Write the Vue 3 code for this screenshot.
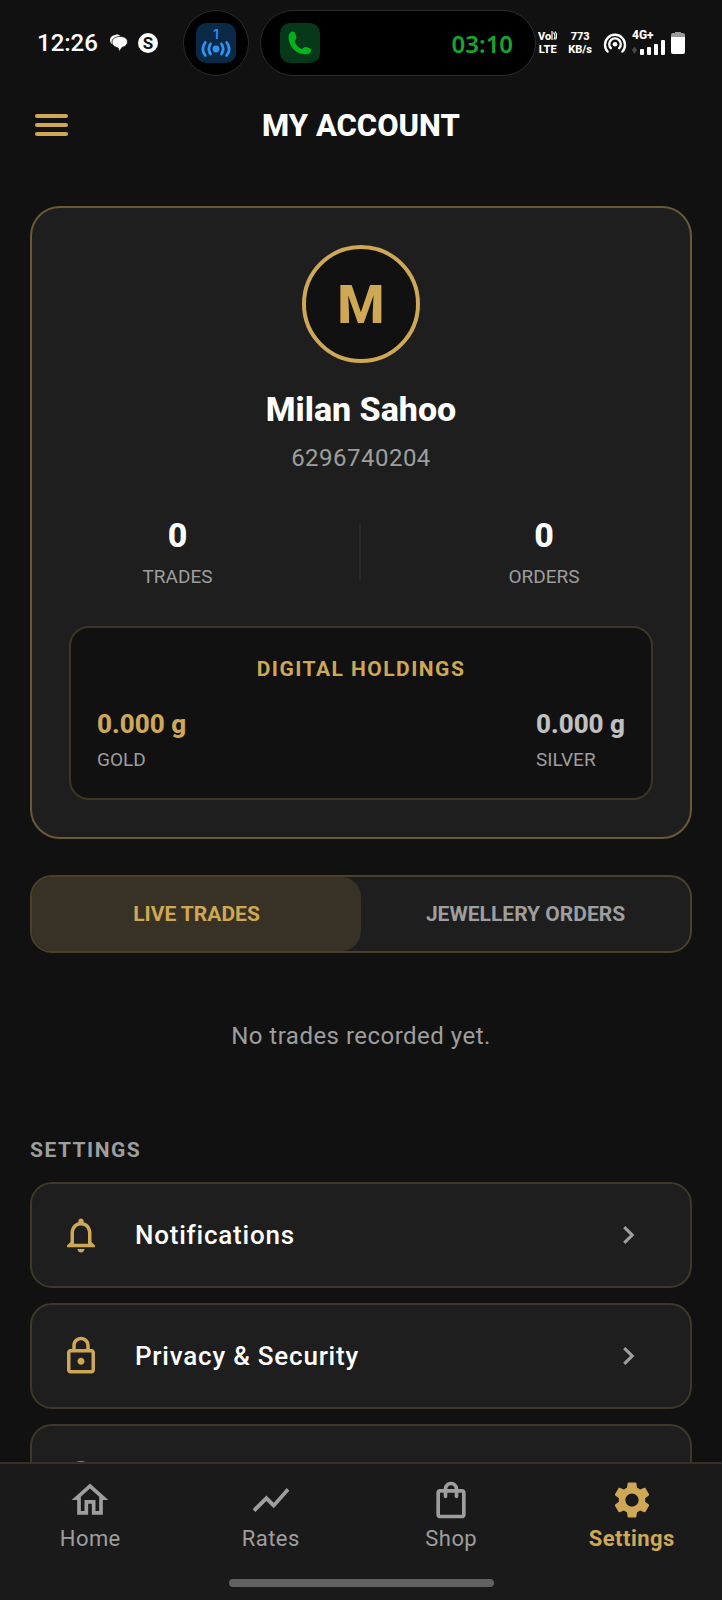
<template>
  <div class="screen">
    <!-- Status bar -->
    <div class="status-bar">
      <div class="status-left">
        <span class="clock">12:26</span>
        <svg class="chat-icon" viewBox="0 0 18 18" aria-hidden="true">
          <path d="M8 .5C3.500.5 0 2.800 0 6c0 2 1 3.500 2.500 4.500L12 3z" fill="#fff" />
          <path d="M10 2.500c4.500 0 7.500 2 7.500 5.300 0 3-2.300 5-5.500 5.600L9.300 17.500 8.200 14C4.500 13 2 11 2 8c0-3.200 3.500-5.500 8-5.500z" fill="#fff" stroke="#111" stroke-width=".8" />
        </svg>
        <span class="s-badge">S</span>
      </div>

      <div class="island island-round">
        <div class="hotspot-tile">
          <span>1</span>
          <svg viewBox="0 0 30 18" aria-hidden="true">
            <circle cx="15" cy="9" r="3.400" fill="#2e93f5" />
            <g fill="none" stroke="#2e93f5" stroke-width="2.800" stroke-linecap="round">
              <path d="M9.500 4c-2 3-2 7 0 10M20.500 4c2 3 2 7 0 10" />
              <path d="M4.300 2.500c-3 4-3 9 0 13M25.700 2.500c3 4 3 9 0 13" />
            </g>
          </svg>
        </div>
      </div>

      <div class="island island-call">
        <div class="call-tile">
          <svg viewBox="0 0 24 24" aria-hidden="true">
            <path d="M3 1C.8 2.200.3 5 .7 8c1.200 8.500 8 14.800 15.800 15.300 3 .2 5.700-.6 6.500-2.800.6-1.600-.2-2.800-1.800-3.400l-2.400-.8c-1.400-.5-2.400-.2-3.300.8-.8.9-1.800 1-2.900.4-2.600-1.400-4.500-3.500-5.700-6.100-.5-1.100-.3-2 .5-2.700 1-.9 1.400-1.900.9-3.200L7.300 2.800C6.500.8 4.800 0 3 1z" fill="#00b519" />
          </svg>
        </div>
        <span class="call-time">03:10</span>
      </div>

      <div class="status-right">
        <span class="tiny-stack"><span>Vo<svg class="volte" viewBox="0 0 6 9" aria-hidden="true"><path d="M1 0v9M2.500 1.500q2.500 3 .5 7M4 .5q3 4 .5 8" fill="none" stroke="#fff" stroke-width="1.200" /></svg></span><span>LTE</span></span>
        <span class="tiny-stack"><span>773</span><span>KB/s</span></span>
        <svg class="hotspot" viewBox="0 0 24 22" aria-hidden="true">
          <g fill="none" stroke="#fff" stroke-width="2.400" stroke-linecap="round">
            <path d="M4.600 19.500a10 10 0 1 1 14.800 0" />
            <path d="M7.800 16.200a5.800 5.800 0 1 1 8.400 0" />
          </g>
          <circle cx="12" cy="12.300" r="2.300" fill="#fff" />
        </svg>
        <span class="signal">
          <span>4G+</span>
          <svg viewBox="0 0 34 16" aria-hidden="true">
            <path d="M0 11l2.500-3.500L5 11l-2.500 4z" fill="#4a4a4a" />
            <g fill="#fff">
              <rect x="8" y="10" width="4" height="6" rx="1" />
              <rect x="15" y="8" width="4" height="8" rx="1" />
              <rect x="22" y="5" width="4" height="11" rx="1" />
              <rect x="29" y="1" width="4" height="15" rx="1" />
            </g>
          </svg>
        </span>
        <svg class="battery" viewBox="0 0 14 22" aria-hidden="true">
          <path d="M4 0h6v1h2a2 2 0 0 1 2 2v2H0V3a2 2 0 0 1 2-2h2z" fill="#999" />
          <path d="M0 5h14v15a2 2 0 0 1-2 2H2a2 2 0 0 1-2-2z" fill="#fff" />
        </svg>
      </div>
    </div>

    <!-- App bar -->
    <header class="app-bar">
      <button class="menu-btn" type="button" aria-label="Menu">
        <span></span>
        <span></span>
        <span></span>
      </button>
      <h1>MY ACCOUNT</h1>
    </header>

    <main class="content">
      <!-- Profile -->
      <section class="profile-card">
        <div class="avatar">{{ user.name.charAt(0) }}</div>
        <h2 class="user-name">{{ user.name }}</h2>
        <p class="user-phone">{{ user.phone }}</p>

        <div class="stats">
          <div class="stat">
            <strong>{{ user.trades }}</strong>
            <span class="caption">TRADES</span>
          </div>
          <div class="stat-divider"></div>
          <div class="stat">
            <strong>{{ user.orders }}</strong>
            <span class="caption">ORDERS</span>
          </div>
        </div>

        <div class="holdings">
          <h3>DIGITAL HOLDINGS</h3>
          <div class="holdings-row">
            <div v-for="metal in holdings" :key="metal.label" class="holding" :class="metal.type">
              <strong>{{ metal.grams.toFixed(3) }} g</strong>
              <span class="caption">{{ metal.label }}</span>
            </div>
          </div>
        </div>
      </section>

      <!-- Tabs -->
      <div class="tabs" role="tablist">
        <button
          v-for="tab in tabs"
          :key="tab.id"
          type="button"
          role="tab"
          class="tab"
          :class="{ active: activeTab === tab.id }"
          :aria-selected="activeTab === tab.id"
          @click="activeTab = tab.id"
        >
          {{ tab.label }}
        </button>
      </div>
      <p class="empty">{{ emptyText }}</p>

      <!-- Settings -->
      <h3 class="section-title">SETTINGS</h3>
      <div class="settings-list">
        <button
          v-for="item in settings"
          :key="item.id"
          type="button"
          class="setting"
          :aria-label="item.id"
        >
          <svg class="setting-icon" viewBox="0 0 24 24" aria-hidden="true">
            <path :d="item.icon" />
          </svg>
          <span>{{ item.label }}</span>
          <svg class="chevron" viewBox="0 0 24 24" aria-hidden="true">
            <path d="M9 7l5 5-5 5" />
          </svg>
        </button>
      </div>
    </main>

    <!-- Bottom navigation -->
    <footer class="bottom-bar">
      <nav>
        <a
          v-for="item in navItems"
          :key="item.label"
          :href="item.href"
          class="nav-item"
          :class="{ active: item.active }"
        >
          <svg viewBox="0 0 24 24" aria-hidden="true">
            <path :d="item.icon" />
          </svg>
          <span>{{ item.label }}</span>
        </a>
      </nav>
      <div class="gesture-bar"></div>
    </footer>
  </div>
</template>

<script setup>
import { ref, computed } from 'vue';

const user = {
  name: 'Milan Sahoo',
  phone: '6296740204',
  trades: 0,
  orders: 0
};

const holdings = [
  { type: 'gold', label: 'GOLD', grams: 0 },
  { type: 'silver', label: 'SILVER', grams: 0 }
];

const tabs = [
  { id: 'trades', label: 'LIVE TRADES' },
  { id: 'orders', label: 'JEWELLERY ORDERS' }
];
const activeTab = ref('trades');

const emptyText = computed(() =>
  activeTab.value === 'trades' ? 'No trades recorded yet.' : 'No orders recorded yet.'
);

const settings = [
  {
    id: 'Notifications',
    label: 'Notifications',
    icon: 'M12 22c1.100 0 2-.9 2-2h-4c0 1.100.9 2 2 2zm6-6v-5c0-3.070-1.630-5.640-4.500-6.320V4c0-.83-.67-1.500-1.500-1.500s-1.500.67-1.500 1.500v.68C7.640 5.360 6 7.920 6 11v5l-2 2v1h16v-1l-2-2zm-2 1H8v-6c0-2.480 1.510-4.500 4-4.500s4 2.020 4 4.500v6z'
  },
  {
    id: 'Privacy & Security',
    label: 'Privacy & Security',
    icon: 'M18 8h-1V6c0-2.760-2.240-5-5-5S7 3.240 7 6v2H6c-1.100 0-2 .9-2 2v10c0 1.100.9 2 2 2h12c1.100 0 2-.9 2-2V10c0-1.100-.9-2-2-2zM9 6c0-1.660 1.340-3 3-3s3 1.340 3 3v2H9V6zm9 14H6V10h12v10zm-6-3c1.100 0 2-.9 2-2s-.9-2-2-2-2 .9-2 2 .9 2 2 2z'
  },
  {
    id: 'Support',
    label: '',
    icon: 'M12 3c-4.970 0-9 4.030-9 9v7c0 1.100.9 2 2 2h4v-8H5v-1c0-3.870 3.130-7 7-7s7 3.130 7 7v1h-4v8h4c1.100 0 2-.9 2-2v-7c0-4.970-4.030-9-9-9z'
  }
];

const navItems = [
  {
    label: 'Home',
    href: '#home',
    icon: 'M12 5.690l5 4.500V18h-2v-6H9v6H7v-7.810l5-4.500M12 3L2 12h3v8h6v-6h2v6h6v-8h3L12 3z'
  },
  {
    label: 'Rates',
    href: '#rates',
    icon: 'M3.500 18.490l6-6.010 4 4L22 6.920l-1.410-1.410-7.090 7.970-4-4L2 16.990z'
  },
  {
    label: 'Shop',
    href: '#shop',
    icon: 'M18 6h-2c0-2.210-1.790-4-4-4S8 3.790 8 6H6c-1.100 0-2 .9-2 2v12c0 1.100.9 2 2 2h12c1.100 0 2-.9 2-2V8c0-1.100-.9-2-2-2zm-6-2c1.100 0 2 .9 2 2h-4c0-1.100.9-2 2-2zm6 16H6V8h2v2c0 .55.45 1 1 1s1-.45 1-1V8h4v2c0 .55.45 1 1 1s1-.45 1-1V8h2v12z'
  },
  {
    label: 'Settings',
    href: '#settings',
    active: true,
    icon: 'M19.140 12.940c.04-.3.060-.61.060-.94 0-.32-.02-.64-.07-.94l2.030-1.580c.18-.14.23-.41.120-.61l-1.920-3.320c-.12-.22-.37-.29-.59-.22l-2.390.96c-.5-.38-1.030-.7-1.620-.94l-.36-2.540c-.04-.24-.24-.41-.48-.41h-3.840c-.24 0-.43.17-.47.41l-.36 2.540c-.59.24-1.130.57-1.620.94l-2.390-.96c-.22-.08-.47 0-.59.22L2.740 8.870c-.12.210-.08.470.12.610l2.030 1.580c-.05.3-.09.63-.09.940s.02.640.07.940l-2.030 1.580c-.18.140-.23.410-.12.610l1.920 3.320c.12.220.37.290.59.220l2.390-.96c.5.380 1.030.7 1.620.94l.36 2.540c.05.240.24.410.48.410h3.840c.24 0 .44-.17.47-.41l.36-2.540c.59-.24 1.130-.56 1.620-.94l2.390.96c.22.080.47 0 .59-.22l1.920-3.320c.12-.22.070-.47-.12-.61l-2.010-1.580zM12 15.600c-1.980 0-3.600-1.620-3.600-3.600s1.620-3.600 3.600-3.600 3.600 1.620 3.600 3.600-1.620 3.600-3.600 3.600z'
  }
];
</script>

<style>
body {
  background: #111;
}
</style>

<style scoped>
.screen {
  display: flex;
  flex-direction: column;
  height: 100vh;
  overflow: hidden;
  background: #111;
  color: #fff;
  font-family: Roboto, sans-serif;
}

.screen * {
  box-sizing: border-box;
}

h1,
h2,
h3,
p {
  margin: 0;
}

button {
  border: none;
  background: none;
  padding: 0;
  color: inherit;
  font-family: inherit;
  cursor: pointer;
}

/* Status bar */
.status-bar {
  display: flex;
  align-items: center;
  flex-shrink: 0;
  height: 86px;
  padding: 0 37px;
}

.status-left {
  display: flex;
  align-items: center;
  flex: 1;
  gap: 10px;
}

.clock {
  margin-right: 2px;
  font-size: 24px;
  font-weight: 500;
}

.chat-icon {
  width: 18px;
  height: 18px;
}

.s-badge {
  width: 20px;
  height: 20px;
  border-radius: 50%;
  background: #fff;
  color: #111;
  font-size: 17px;
  font-weight: 700;
  line-height: 20px;
  text-align: center;
}

.island {
  display: flex;
  align-items: center;
  height: 66px;
  border: 1px solid #2b2b2b;
  border-radius: 33px;
  background: #000;
}

.island-round {
  justify-content: center;
  width: 66px;
  margin-right: 11px;
}

.island-call {
  justify-content: space-between;
  width: 276px;
  padding: 0 22px 0 19px;
}

.hotspot-tile,
.call-tile {
  display: flex;
  flex-direction: column;
  align-items: center;
  justify-content: center;
  width: 40px;
  height: 40px;
  border-radius: 10px;
}

.hotspot-tile {
  background: #0a2947;
  color: #2e93f5;
  font-family: Inter, sans-serif;
  font-size: 13px;
  font-weight: 600;
  line-height: 12px;
}

.hotspot-tile svg {
  width: 30px;
  height: 18px;
}

.call-tile {
  background: #07381a;
}

.call-tile svg {
  width: 24px;
  height: 24px;
}

.call-time {
  color: #17a62d;
  font-family: "Noto Sans", sans-serif;
  font-size: 24px;
  font-weight: 600;
}

.status-right {
  display: flex;
  align-items: center;
  gap: 11px;
  margin-left: 2px;
}

.tiny-stack {
  display: flex;
  flex-direction: column;
  align-items: center;
  font-size: 11px;
  font-weight: 800;
  line-height: 13px;
}

.volte {
  width: 6px;
  height: 9px;
}

.hotspot {
  width: 24px;
  height: 22px;
}

.signal {
  display: flex;
  flex-direction: column;
  margin-left: -6px;
  font-size: 12px;
  font-weight: 800;
  line-height: 8px;
}

.signal svg {
  width: 34px;
  height: 16px;
}

.battery {
  width: 14px;
  height: 22px;
  margin-left: -6px;
}

/* App bar */
.app-bar {
  display: grid;
  grid-template-columns: 42px 1fr 42px;
  align-items: center;
  flex-shrink: 0;
  height: 78px;
  padding: 0 30px;
}

.app-bar h1 {
  font-size: 31px;
  font-weight: 800;
  text-align: center;
}

.menu-btn {
  display: flex;
  flex-direction: column;
  align-items: center;
  justify-content: center;
  gap: 5px;
  width: 42px;
  height: 42px;
}

.menu-btn span {
  width: 33px;
  height: 4px;
  border-radius: 2px;
  background: #cfa855;
}

.content {
  flex: 1;
  min-height: 0;
  overflow-y: auto;
  scrollbar-width: none;
  padding: 42px 30px 15px;
}

.caption {
  color: #9e9e9e;
  font-size: 19px;
  line-height: 22px;
}

/* Profile */
.profile-card {
  display: flex;
  flex-direction: column;
  align-items: center;
  padding: 37px;
  border: 2px solid #6a5936;
  border-radius: 30px;
  background: #1e1e1e;
}

.avatar {
  display: flex;
  align-items: center;
  justify-content: center;
  width: 118px;
  height: 118px;
  border: 4px solid #cfa855;
  border-radius: 50%;
  background: #111;
  color: #cfa855;
  font-size: 54px;
  font-weight: 800;
}

.user-name {
  margin-top: 25px;
  font-size: 34px;
  font-weight: 800;
  line-height: 42px;
}

.user-phone {
  margin-top: 14px;
  color: #9e9e9e;
  font-size: 24px;
  line-height: 28px;
  letter-spacing: 0.02em;
}

.stats {
  display: flex;
  align-items: center;
  justify-content: space-around;
  align-self: stretch;
  margin: 43px 0 38px;
}

.stat {
  display: flex;
  flex-direction: column;
  align-items: center;
  gap: 11px;
}

.stat strong {
  font-size: 34px;
  font-weight: 800;
  line-height: 40px;
}

.stat-divider {
  width: 2px;
  height: 56px;
  background: #292929;
}

.holdings {
  align-self: stretch;
  padding: 29px 26px 27px;
  border: 2px solid #3e3625;
  border-radius: 20px;
  background: #111;
}

.holdings h3 {
  margin-bottom: 28px;
  color: #cfa855;
  font-size: 21px;
  font-weight: 700;
  line-height: 24px;
  text-align: center;
  letter-spacing: 0.07em;
}

.holdings-row {
  display: flex;
  justify-content: space-between;
}

.holding {
  display: flex;
  flex-direction: column;
  gap: 10px;
}

.holding strong {
  font-size: 26px;
  font-weight: 800;
  line-height: 30px;
}

.gold strong {
  color: #cfa855;
}

.silver strong {
  color: #c0c0c0;
}

/* Tabs */
.tabs {
  display: flex;
  height: 78px;
  margin-top: 36px;
  border: 2px solid #4b402a;
  border-radius: 22px;
  background: #1e1e1e;
}

.tab {
  flex: 1;
  border-radius: 20px;
  color: #9e9e9e;
  font-size: 21px;
  font-weight: 700;
}

.tab.active {
  background: #383226;
  color: #cfa855;
}

.empty {
  padding: 69px 0 88px;
  color: #9e9e9e;
  font-size: 24px;
  line-height: 28px;
  text-align: center;
  letter-spacing: 0.02em;
}

/* Settings */
.section-title {
  margin-bottom: 20px;
  color: #9e9e9e;
  font-size: 21px;
  font-weight: 700;
  line-height: 24px;
  letter-spacing: 0.07em;
}

.settings-list {
  display: flex;
  flex-direction: column;
  gap: 15px;
}

.setting {
  display: flex;
  align-items: center;
  flex-shrink: 0;
  height: 106px;
  padding: 0 42px 0 28px;
  border: 2px solid #3e3829;
  border-radius: 22px;
  background: #1e1e1e;
  font-size: 26px;
  font-weight: 500;
  text-align: left;
  letter-spacing: 0.03em;
}

.setting span {
  flex: 1;
  margin-left: 33px;
}

.setting-icon {
  width: 42px;
  height: 42px;
  fill: #cfa855;
}

.chevron {
  width: 38px;
  height: 38px;
  fill: none;
  stroke: #9e9e9e;
  stroke-width: 2;
}

/* Bottom navigation */
.bottom-bar {
  flex-shrink: 0;
  padding: 14px 0 13px;
  border-top: 2px solid #383022;
  background: #1a1a1a;
}

.bottom-bar nav {
  display: flex;
}

.nav-item {
  display: flex;
  flex: 1;
  flex-direction: column;
  align-items: center;
  gap: 4px;
  color: #9e9e9e;
  font-size: 22px;
  line-height: 26px;
  text-decoration: none;
  letter-spacing: 0.02em;
}

.nav-item svg {
  width: 44px;
  height: 44px;
  fill: currentColor;
}

.nav-item.active {
  color: #cfa855;
  font-weight: 700;
}

.gesture-bar {
  width: 265px;
  max-width: 60%;
  height: 8px;
  margin: 27px auto 0;
  border-radius: 4px;
  background: #616161;
}
</style>
